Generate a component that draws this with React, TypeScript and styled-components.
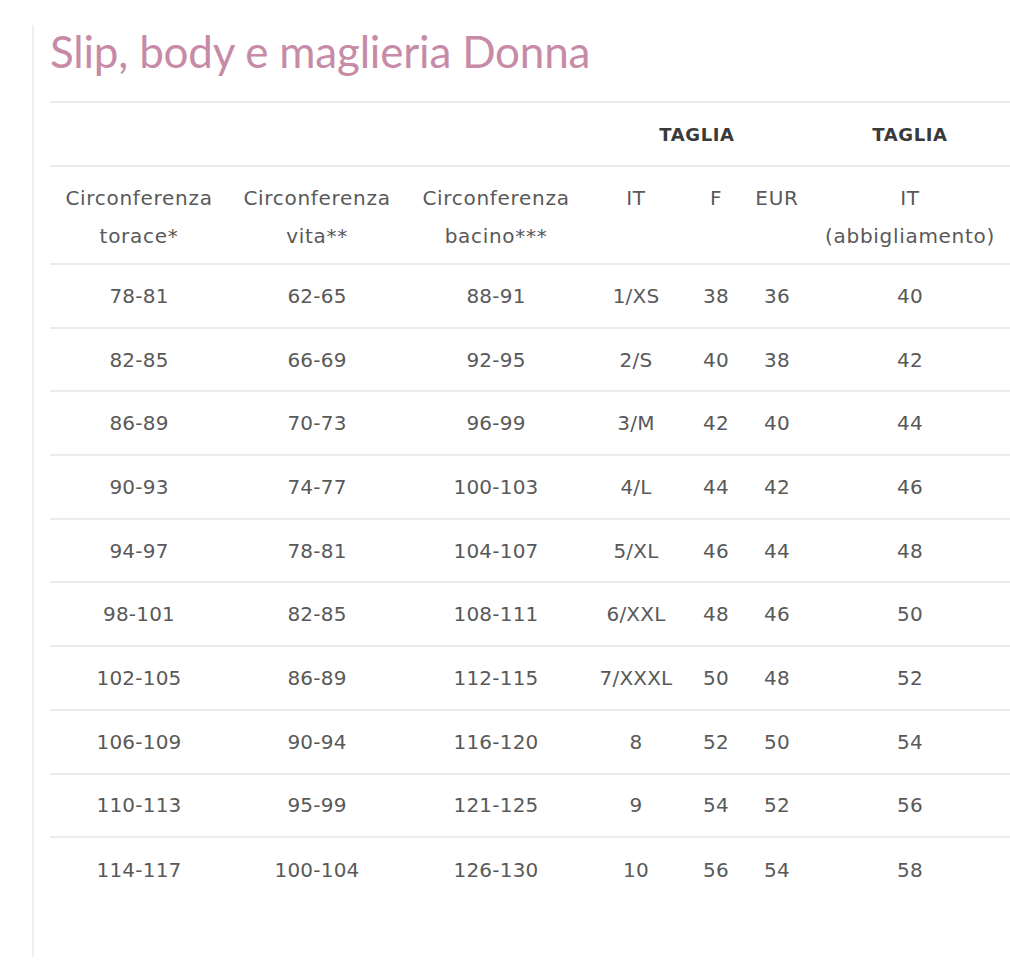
import styled, { createGlobalStyle } from "styled-components";

const GlobalStyle = createGlobalStyle`
  html, body {
    margin: 0;
    padding: 0;
    background: #ffffff;
    overflow: hidden;
  }
`;

const Page = styled.div`
  width: 1010px;
  height: 964px;
  padding-top: 25px;
  box-sizing: border-box;
`;

const Panel = styled.div`
  margin-left: 32px;
  height: 932px;
  border-left: 2px solid #eeeeee;
  padding-left: 16px;
  box-sizing: border-box;
`;

const Title = styled.h1`
  margin: 0;
  height: 76px;
  font-family: Lato, "Liberation Sans", sans-serif;
  font-weight: 400;
  font-size: 44px;
  line-height: 52px;
  letter-spacing: -0.2px;
  color: #c78ba8;
`;

const Table = styled.table`
  border-collapse: collapse;
  table-layout: fixed;
  width: 962px;
  font-family: "DejaVu Sans", Verdana, sans-serif;
  font-size: 20px;
  color: #595959;
`;

const Row = styled.tr<{ $h: number }>`
  height: ${(p) => p.$h}px;
  border-top: 2px solid #ececec;
`;

const GroupHead = styled.th`
  font-weight: 700;
  font-size: 18px;
  letter-spacing: 0.6px;
  color: #3a3a3a;
  text-align: center;
  vertical-align: middle;
  padding: 0;
`;

const ColHead = styled.th`
  font-weight: 400;
  letter-spacing: 0.7px;
  text-align: center;
  vertical-align: top;
  line-height: 38px;
  padding: 12px 0 0;
`;

const Cell = styled.td`
  letter-spacing: 0.2px;
  text-align: center;
  vertical-align: middle;
  padding: 0;
`;

const widths = [178, 178, 180, 100, 60, 62, 204];

const rows = [
  ["78-81", "62-65", "88-91", "1/XS", "38", "36", "40"],
  ["82-85", "66-69", "92-95", "2/S", "40", "38", "42"],
  ["86-89", "70-73", "96-99", "3/M", "42", "40", "44"],
  ["90-93", "74-77", "100-103", "4/L", "44", "42", "46"],
  ["94-97", "78-81", "104-107", "5/XL", "46", "44", "48"],
  ["98-101", "82-85", "108-111", "6/XXL", "48", "46", "50"],
  ["102-105", "86-89", "112-115", "7/XXXL", "50", "48", "52"],
  ["106-109", "90-94", "116-120", "8", "52", "50", "54"],
  ["110-113", "95-99", "121-125", "9", "54", "52", "56"],
  ["114-117", "100-104", "126-130", "10", "56", "54", "58"],
];

export default function App() {
  return (
    <Page>
      <GlobalStyle />
      <Panel>
        <Title>Slip, body e maglieria Donna</Title>
        <Table>
          <colgroup>
            {widths.map((w, i) => (
              <col key={i} style={{ width: w }} />
            ))}
          </colgroup>
          <thead>
            <Row $h={64}>
              <GroupHead colSpan={3} />
              <GroupHead colSpan={3}>TAGLIA</GroupHead>
              <GroupHead>TAGLIA</GroupHead>
            </Row>
            <Row $h={98}>
              <ColHead>
                Circonferenza
                <br />
                torace*
              </ColHead>
              <ColHead>
                Circonferenza
                <br />
                vita**
              </ColHead>
              <ColHead>
                Circonferenza
                <br />
                bacino***
              </ColHead>
              <ColHead>IT</ColHead>
              <ColHead>F</ColHead>
              <ColHead>EUR</ColHead>
              <ColHead>
                IT
                <br />
                (abbigliamento)
              </ColHead>
            </Row>
          </thead>
          <tbody>
            {rows.map((r, i) => (
              <Row key={i} $h={63.7}>
                {r.map((c, j) => (
                  <Cell key={j}>{c}</Cell>
                ))}
              </Row>
            ))}
          </tbody>
        </Table>
      </Panel>
    </Page>
  );
}
